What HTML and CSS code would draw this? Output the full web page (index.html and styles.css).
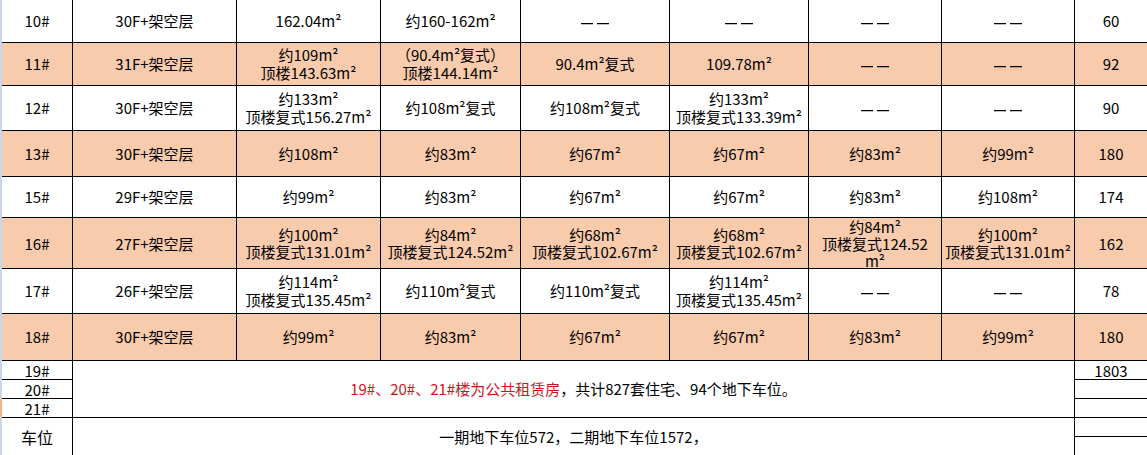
FILE: index.html
```html
<!DOCTYPE html>
<html lang="zh-CN">
<head>
<meta charset="utf-8">
<title>楼栋户型表</title>
<link rel="stylesheet" href="styles.css">
</head>
<body>
<div class="sheet">
  <div class="edge"></div>
  <div class="grid">
    <div class="c">10#</div>
    <div class="c">30F+架空层</div>
    <div class="c">162.04m²</div>
    <div class="c">约160-162m²</div>
    <div class="c"><span class="dash"><span>—</span><span>—</span></span></div>
    <div class="c"><span class="dash"><span>—</span><span>—</span></span></div>
    <div class="c"><span class="dash"><span>—</span><span>—</span></span></div>
    <div class="c"><span class="dash"><span>—</span><span>—</span></span></div>
    <div class="c last">60</div>

    <div class="c p">11#</div>
    <div class="c p">31F+架空层</div>
    <div class="c p">约109m²<br>顶楼143.63m²</div>
    <div class="c p">（90.4m²复式）<br>顶楼144.14m²</div>
    <div class="c p">90.4m²复式</div>
    <div class="c p">109.78m²</div>
    <div class="c p"><span class="dash"><span>—</span><span>—</span></span></div>
    <div class="c p"><span class="dash"><span>—</span><span>—</span></span></div>
    <div class="c p last">92</div>

    <div class="c">12#</div>
    <div class="c">30F+架空层</div>
    <div class="c">约133m²<br>顶楼复式156.27m²</div>
    <div class="c">约108m²复式</div>
    <div class="c">约108m²复式</div>
    <div class="c">约133m²<br>顶楼复式133.39m²</div>
    <div class="c"><span class="dash"><span>—</span><span>—</span></span></div>
    <div class="c"><span class="dash"><span>—</span><span>—</span></span></div>
    <div class="c last">90</div>

    <div class="c p">13#</div>
    <div class="c p">30F+架空层</div>
    <div class="c p">约108m²</div>
    <div class="c p">约83m²</div>
    <div class="c p">约67m²</div>
    <div class="c p">约67m²</div>
    <div class="c p">约83m²</div>
    <div class="c p">约99m²</div>
    <div class="c p last">180</div>

    <div class="c">15#</div>
    <div class="c">29F+架空层</div>
    <div class="c">约99m²</div>
    <div class="c">约83m²</div>
    <div class="c">约67m²</div>
    <div class="c">约67m²</div>
    <div class="c">约83m²</div>
    <div class="c">约108m²</div>
    <div class="c last">174</div>

    <div class="c p r16">16#</div>
    <div class="c p r16">27F+架空层</div>
    <div class="c p r16">约100m²<br>顶楼复式131.01m²</div>
    <div class="c p r16">约84m²<br>顶楼复式124.52m²</div>
    <div class="c p r16">约68m²<br>顶楼复式102.67m²</div>
    <div class="c p r16">约68m²<br>顶楼复式102.67m²</div>
    <div class="c p r16">约84m²<br>顶楼复式124.52<br>m²</div>
    <div class="c p r16">约100m²<br>顶楼复式131.01m²</div>
    <div class="c p r16 last">162</div>

    <div class="c">17#</div>
    <div class="c">26F+架空层</div>
    <div class="c">约114m²<br>顶楼复式135.45m²</div>
    <div class="c">约110m²复式</div>
    <div class="c">约110m²复式</div>
    <div class="c">约114m²<br>顶楼复式135.45m²</div>
    <div class="c"><span class="dash"><span>—</span><span>—</span></span></div>
    <div class="c"><span class="dash"><span>—</span><span>—</span></span></div>
    <div class="c last">78</div>

    <div class="c p">18#</div>
    <div class="c p">30F+架空层</div>
    <div class="c p">约99m²</div>
    <div class="c p">约83m²</div>
    <div class="c p">约67m²</div>
    <div class="c p">约67m²</div>
    <div class="c p">约83m²</div>
    <div class="c p">约99m²</div>
    <div class="c p last">180</div>

    <div class="c s">19#</div>
    <div class="c note3"><span class="red">19#、20#、21#楼为公共租赁房</span>，共计827套住宅、94个地下车位。</div>
    <div class="c s last">1803</div>
    <div class="c s">20#</div>
    <div class="c s last"></div>
    <div class="c s">21#</div>
    <div class="c s last"></div>

    <div class="c span2 big">车位</div>
    <div class="c note2">一期地下车位572，二期地下车位1572，</div>
    <div class="c s last"></div>
    <div class="c s last"></div>
  </div>
</div>
</body>
</html>
```

FILE: styles.css
```css
* {
  box-sizing: border-box;
}

body {
  margin: 0;
  background: #ffffff;
  color: #000000;
  font-family: "Noto Sans CJK SC", "Noto Sans", sans-serif;
  font-size: 15px;
}

.sheet {
  display: flex;
  width: 1147px;
  height: 455px;
  overflow: hidden;
}

.edge {
  flex: none;
  width: 2px;
  background: linear-gradient(to bottom, #c9d7e8 0 399px, #f4b183 399px 417px, #c9d7e8 417px);
}

.grid {
  flex: none;
  display: grid;
  grid-template-columns: 71px 164px 144px 140px 149px 139px 133px 133px 72px;
  grid-template-rows: 43px 43px 45px 46px 41px 51px 45px 47px 19px 19px 19px 19px 19px;
}

.c {
  display: flex;
  align-items: center;
  justify-content: center;
  text-align: center;
  white-space: nowrap;
  overflow: hidden;
  line-height: 18px;
  border-right: 1px solid #000000;
  border-bottom: 1px solid #000000;
}

.c.last {
  border-right: none;
}

.c.p {
  background: #f8cbad;
}

.c.r16 {
  line-height: 17px;
}

.c.s {
  line-height: 17px;
}

.dash {
  display: inline-flex;
  gap: 4px;
  font-size: 18px;
  line-height: 18px;
}

.dash span {
  display: flex;
  justify-content: center;
  width: 12px;
  overflow: hidden;
}

.note3 {
  grid-column: 2 / 9;
  grid-row: span 3;
}

.note2 {
  grid-column: 2 / 9;
  grid-row: span 2;
}

.span2 {
  grid-row: span 2;
}

.big {
  font-size: 16px;
}

.red {
  color: #d0121b;
}
```
